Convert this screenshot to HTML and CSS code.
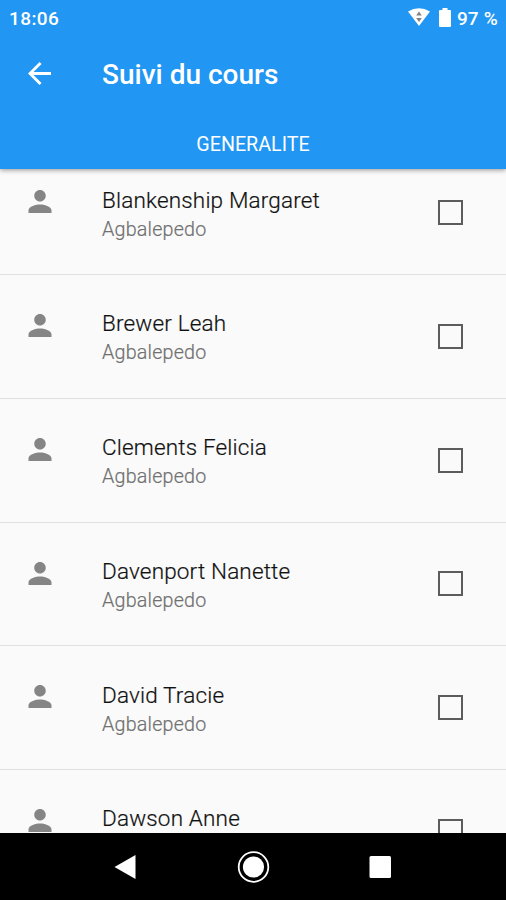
FILE: index.html
```html
<!DOCTYPE html>
<html lang="fr">
<head>
<meta charset="utf-8">
<title>Suivi du cours</title>
<link rel="stylesheet" href="styles.css">
</head>
<body>
<svg class="defs" aria-hidden="true">
  <symbol id="person" viewBox="4 4 16 16"><path d="M12 12c2.210 0 4-1.790 4-4s-1.790-4-4-4-4 1.790-4 4 1.790 4 4 4zm0 2c-2.670 0-8 1.340-8 4v2h16v-2c0-2.660-5.330-4-8-4z"/></symbol>
</svg>
<div class="screen">
  <header class="app-header">
    <div class="status-bar">
      <span class="clock">18:06</span>
      <div class="status-icons">
        <svg class="wifi" viewBox="0 0 22 18"><path fill="#fff" d="M0 3.500Q11-3.200 22 3.500L11 18z"/><path fill="#85817c" d="M8.200 7.500L11 3.500l2.800 4zM8.200 10h5.600L11 14z"/></svg>
        <svg class="battery" viewBox="0 0 12 19"><path fill="#fff" d="M3.500 0h5v2H11q1 0 1 1v15q0 1-1 1H1q-1 0-1-1V3q0-1 1-1h2.500z"/></svg>
        <span class="percent">97 %</span>
      </div>
    </div>
    <div class="toolbar">
      <svg class="back" viewBox="4 4 16 16"><path fill="#fff" d="M20 11H7.830l5.590-5.590L12 4l-8 8 8 8 1.410-1.410L7.830 13H20v-2z"/></svg>
      <h1 class="title">Suivi du cours</h1>
    </div>
    <div class="tabs"><span class="tab">GENERALITE</span></div>
  </header>
  <main class="list-view">
    <ul class="list">
      <li class="row"><svg class="person"><use href="#person"/></svg><div class="info"><div class="name">Blankenship Margaret</div><div class="place">Agbalepedo</div></div><span class="checkbox"></span></li>
      <li class="row"><svg class="person"><use href="#person"/></svg><div class="info"><div class="name">Brewer Leah</div><div class="place">Agbalepedo</div></div><span class="checkbox"></span></li>
      <li class="row"><svg class="person"><use href="#person"/></svg><div class="info"><div class="name">Clements Felicia</div><div class="place">Agbalepedo</div></div><span class="checkbox"></span></li>
      <li class="row"><svg class="person"><use href="#person"/></svg><div class="info"><div class="name">Davenport Nanette</div><div class="place">Agbalepedo</div></div><span class="checkbox"></span></li>
      <li class="row"><svg class="person"><use href="#person"/></svg><div class="info"><div class="name">David Tracie</div><div class="place">Agbalepedo</div></div><span class="checkbox"></span></li>
      <li class="row"><svg class="person"><use href="#person"/></svg><div class="info"><div class="name">Dawson Anne</div></div><span class="checkbox"></span></li>
    </ul>
  </main>
  <nav class="nav-bar">
    <svg class="nav-icon" viewBox="0 0 34 34"><path fill="#fff" d="M5.500 17L26.500 5v24z"/></svg>
    <svg class="nav-icon" viewBox="0 0 34 34"><circle cx="17.500" cy="17" r="14.800" fill="none" stroke="#fff" stroke-width="1.800"/><circle cx="17.500" cy="17" r="10.600" fill="#fff"/></svg>
    <svg class="nav-icon" viewBox="0 0 34 34"><rect x="6.500" y="6" width="21.500" height="22" rx="1.500" fill="#fff"/></svg>
  </nav>
</div>
</body>
</html>
```

FILE: styles.css
```css
* { box-sizing: border-box; }
body { margin: 0; font-family: Roboto, sans-serif; background: #fafafa; }
.defs { position: absolute; width: 0; height: 0; }
.screen { display: flex; flex-direction: column; width: 506px; height: 900px; overflow: hidden; }
.app-header {
  position: relative;
  z-index: 1;
  flex: none;
  height: 169px;
  background: #2196f3;
  color: #fff;
  box-shadow: 0 1px 5px rgba(0, 0, 0, .42);
}
.status-bar { display: flex; align-items: center; justify-content: space-between; height: 36px; padding: 0 8px 0 9px; font-size: 19px; font-weight: 500; }
.clock { letter-spacing: .4px; }
.percent { letter-spacing: .2px; }
.status-icons { display: flex; align-items: center; }
.wifi { width: 22px; height: 18px; margin: 0 9px 2px 0; }
.battery { width: 12px; height: 19px; margin: 0 6px 1px 0; }
.toolbar { display: flex; align-items: center; height: 76px; padding-left: 28px; }
.back { width: 23px; height: 23px; margin: 0 51px 1px 0; }
.title { margin: 0; padding-top: 2px; font-size: 28px; font-weight: 500; line-height: 32px; }
.tabs { display: flex; justify-content: center; height: 57px; line-height: 66px; font-size: 19.700px; }
.list-view { flex: 1; min-height: 0; overflow: hidden; background: #fafafa; }
.list { margin: -17.700px 0 0; padding: 0; list-style: none; }
.row { display: flex; height: 123.750px; padding: 0 43px 0 28px; border-bottom: 1px solid #dfdfdf; }
.person { width: 24px; height: 23px; margin-top: 39px; fill: #858585; }
.info { flex: 1; padding: 33.300px 0 0 50px; white-space: nowrap; }
.name { font-size: 22.500px; line-height: 30px; color: #111; font-weight: 300; letter-spacing: .17px; -webkit-text-stroke: .2px currentColor; }
.place { font-size: 19.700px; line-height: 29px; color: #707070; font-weight: 300; letter-spacing: .2px; -webkit-text-stroke: .2px currentColor; }
.checkbox { align-self: center; width: 25px; height: 25px; border: 2px solid #5c5c5c; }
.nav-bar { display: flex; flex: none; align-items: center; justify-content: center; gap: 93px; height: 67px; background: #000; }
.nav-icon { width: 34px; height: 34px; }
```
